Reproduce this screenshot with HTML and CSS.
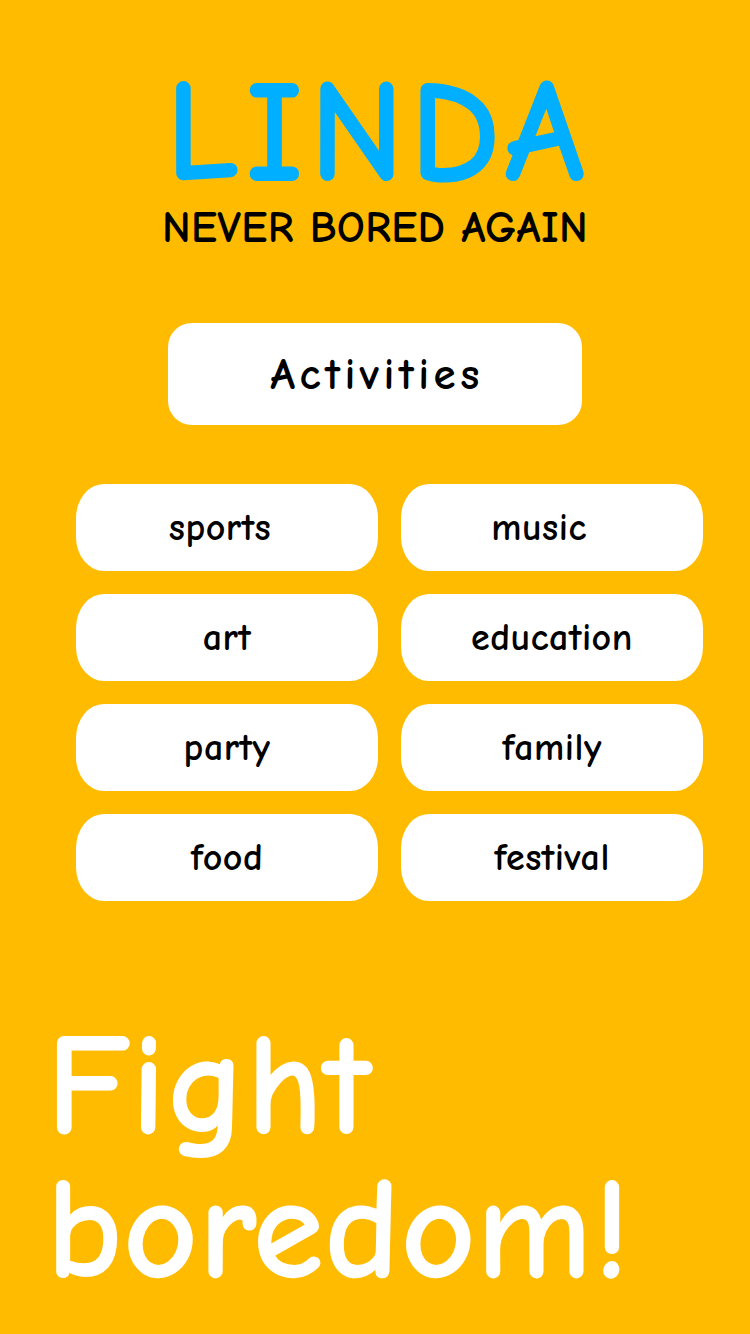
FILE: index.html
```html
<!DOCTYPE html>
<html lang="en">
<head>
<meta charset="utf-8">
<title>Linda - Never bored again</title>
<link rel="stylesheet" href="styles.css">
</head>
<body>
<main class="screen">
  <header class="brand">
    <h1 class="brand-title">LINDA</h1>
    <p class="brand-tagline">NEVER BORED AGAIN</p>
  </header>

  <div class="activities-wrap">
    <button class="activities-btn" type="button">Activities</button>
  </div>

  <nav class="categories">
    <button class="cat cat--pad-s" type="button">sports</button>
    <button class="cat cat--pad-l" type="button">music</button>
    <button class="cat" type="button">art</button>
    <button class="cat" type="button">education</button>
    <button class="cat" type="button">party</button>
    <button class="cat" type="button">family</button>
    <button class="cat" type="button">food</button>
    <button class="cat" type="button">festival</button>
  </nav>

  <p class="slogan">Fight<br>boredom!</p>
</main>
</body>
</html>
```

FILE: styles.css
```css
html, body {
  margin: 0;
  padding: 0;
  background: #ffbb00;
}

body {
  font-family: "Comic Sans MS", "Comic Neue", "Open Sans", sans-serif;
  width: 750px;
  height: 1334px;
  overflow: hidden;
}

.screen {
  display: flex;
  flex-direction: column;
}

.brand {
  display: flex;
  flex-direction: column;
  align-items: center;
  padding-top: 60px;
}

.brand-title {
  margin: 0;
  font-size: 146px;
  line-height: 146px;
  font-weight: 700;
  color: #00afff;
  letter-spacing: 5px;
  padding-left: 5px;
}

.brand-tagline {
  margin: 0;
  font-size: 44px;
  line-height: 44px;
  font-weight: 700;
  color: #000;
  letter-spacing: 0.3px;
}

.activities-wrap {
  display: flex;
  justify-content: center;
  margin-top: 73px;
}

.activities-btn {
  width: 414px;
  height: 102px;
  border: none;
  border-radius: 24px;
  background: #fff;
  color: #000;
  font-family: inherit;
  font-size: 45px;
  font-weight: 700;
  letter-spacing: 4.5px;
  display: flex;
  align-items: center;
  justify-content: center;
  padding: 0 0 0 4px;
}

.categories {
  display: grid;
  grid-template-columns: 302px 302px;
  grid-auto-rows: 87px;
  column-gap: 23px;
  row-gap: 23px;
  padding-left: 76px;
  margin-top: 59px;
}

.cat {
  border: none;
  background: #fff;
  border-radius: 28px / 34px;
  color: #000;
  font-family: inherit;
  font-size: 38px;
  font-weight: 700;
  letter-spacing: 0.5px;
  display: flex;
  align-items: center;
  justify-content: center;
  padding: 0;
}

.cat--pad-s {
  padding-right: 14px;
}

.cat--pad-l {
  padding-right: 26px;
}

.slogan {
  margin: 113px 0 0;
  padding-left: 46px;
  font-size: 146px;
  line-height: 144px;
  font-weight: 700;
  color: #fff;
}
```
